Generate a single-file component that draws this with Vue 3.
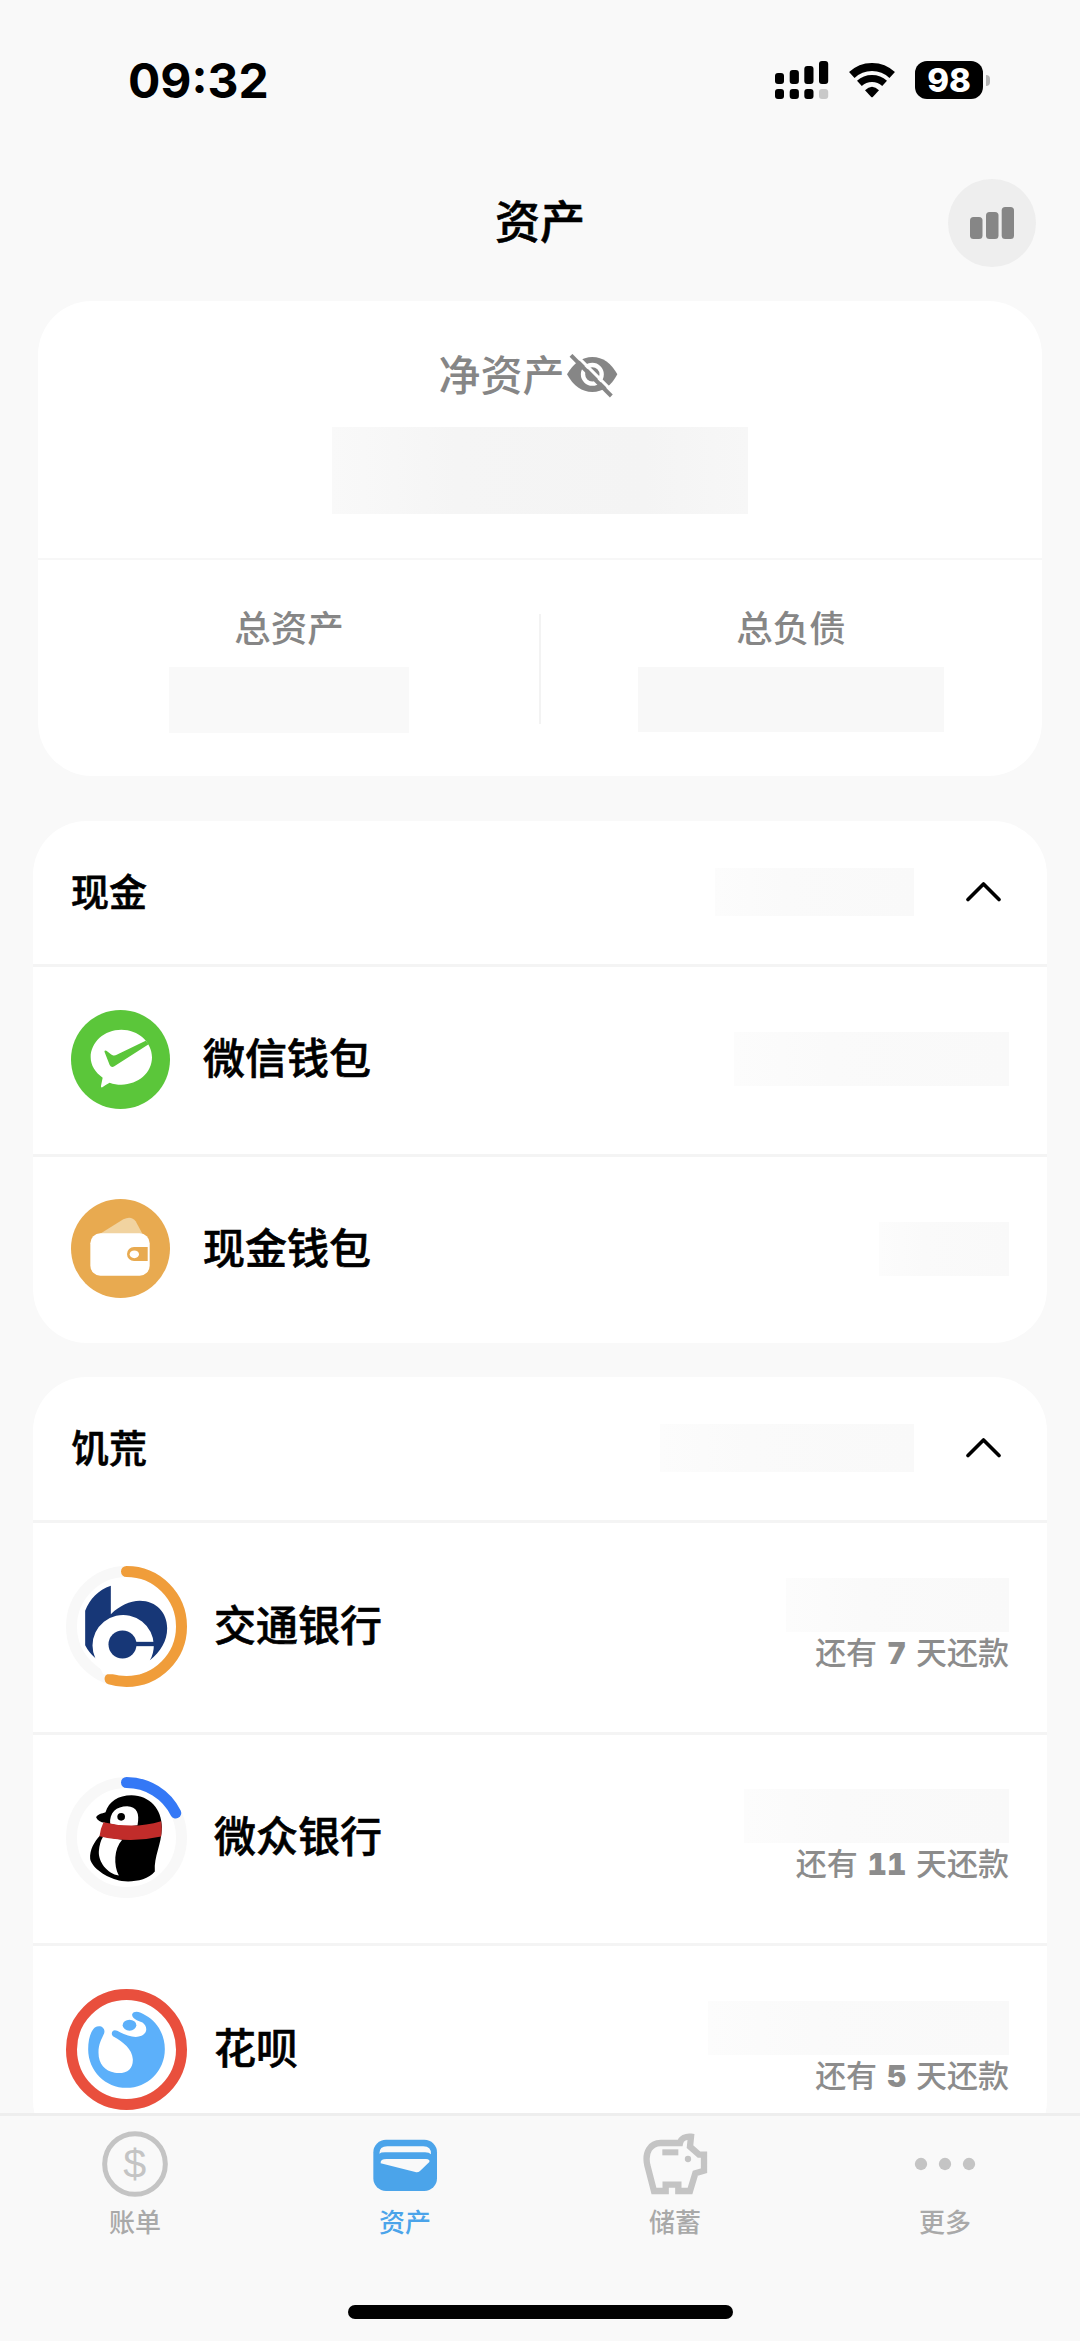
<script setup>
const cash = [
  { id: 'wechat', name: '微信钱包', width: 275 },
  { id: 'wallet', name: '现金钱包', width: 130 },
]
const debts = [
  { id: 'bocom', name: '交通银行', width: 223, days: 7, color: '#f09d3a', percent: 54.8 },
  { id: 'webank', name: '微众银行', width: 265, days: 11, color: '#3478f6', percent: 17.6 },
  { id: 'huabei', name: '花呗', width: 301, days: 5, color: '#e94f3d', percent: 100 },
]
</script>

<template>
  <div class="phone">
    <header class="status">
      <span class="time">09:32</span>
      <div class="indicators">
        <svg class="signal" width="54" height="38" viewBox="0 0 54 38">
          <rect x="0" y="12" width="9" height="11" rx="3" />
          <rect x="14.7" y="9" width="9.2" height="14" rx="3" />
          <rect x="29.3" y="5" width="9.2" height="18" rx="3" />
          <rect x="44" y="0" width="9.2" height="23" rx="3" />
          <rect x="0" y="28" width="9" height="10" rx="3" />
          <rect x="14.7" y="28" width="9.2" height="10" rx="3" />
          <rect x="29.3" y="28" width="9.2" height="10" rx="3" />
          <rect x="44" y="28" width="9.2" height="10" rx="3" fill="#c9c9c9" />
        </svg>
        <svg class="wifi" width="46" height="35" viewBox="0 0 46 35">
          <path d="M2.8 12A29.5 29.5 0 0 1 43.2 12" fill="none" stroke="#000" stroke-width="8" />
          <path d="M10.4 20.4A18.5 18.5 0 0 1 35.6 20.4" fill="none" stroke="#000" stroke-width="7" />
          <path d="M16 27.3Q23 20.3 30 27.3L24 33.8Q23 34.8 22 33.8Z" />
        </svg>
        <span class="battery">98</span>
        <i class="battery-cap"></i>
      </div>
    </header>

    <nav class="navbar">
      <h1>资产</h1>
      <button class="chart" aria-label="chart">
        <svg width="44" height="32" viewBox="0 0 44 32" fill="#868686">
          <rect x="0" y="10" width="12.5" height="22" rx="3.5" />
          <rect x="16" y="5" width="12.5" height="27" rx="3.5" />
          <rect x="31.7" y="0" width="12.3" height="32" rx="3.5" />
        </svg>
      </button>
    </nav>

    <main>
      <section class="summary">
        <div class="net">
          <div class="net-label">
            <span>净资产</span>
            <svg width="51" height="44" viewBox="801 102 153 132">
              <path d="M801 163C820 130 846 111 877 111C909 111 934 130 952 163C934 198 908 216 877 216C846 216 820 198 801 163Z" fill="#868686" />
              <circle cx="877" cy="163" r="28" fill="none" stroke="#fff" stroke-width="13" />
              <path d="M824 101L944 221" stroke="#fff" stroke-width="9" />
              <path d="M813 106L934 228" stroke="#868686" stroke-width="12" />
            </svg>
          </div>
          <div class="mask net-mask"></div>
        </div>
        <div class="totals">
          <div class="total">
            <span>总资产</span>
            <div class="mask assets-mask"></div>
          </div>
          <div class="total">
            <span>总负债</span>
            <div class="mask debts-mask"></div>
          </div>
        </div>
      </section>

      <section class="group">
        <div class="group-head">
          <h2>现金</h2>
          <div class="mask head-mask cash-mask"></div>
          <svg class="chevron" width="35" height="21" viewBox="0 0 35 21"><path d="M2 18.5L17.5 3L33 18.5" /></svg>
        </div>
        <div v-for="a in cash" :key="a.id" class="row">
          <svg v-if="a.id === 'wechat'" class="round" viewBox="95 91 297 297">
            <circle cx="243.5" cy="239.5" r="148.5" fill="#5bc63a" />
            <path fill="#fff" d="M246 150C297 150 338 187 338 233C338 279 297 315 246 315C234 315 222 313 211 309Q199 315 189 323Q184 325 185 318L190 294C168 279 154 257 154 233C154 187 195 150 246 150Z" />
            <path fill="#5bc63a" d="M196 218Q193 211 201 213C211 218 217 230 229 227L319 183L328 194L225 260Q216 265 211 256Z" />
          </svg>
          <svg v-else class="round" viewBox="95 660 297 297">
            <circle cx="243.5" cy="808.5" r="148.5" fill="#e8aa50" />
            <path d="M180 766L252 721Q276 709 289 727L310 766Z" fill="#f1d3a0" />
            <rect x="153" y="763" width="178" height="127" rx="30" fill="#fff" />
            <path d="M284 804H325V846H284A21 21 0 0 1 284 804Z" fill="#e8aa50" />
            <ellipse cx="285" cy="826" rx="14" ry="11.5" fill="#fff" />
          </svg>
          <span class="name">{{ a.name }}</span>
          <div class="mask row-mask" :style="{ width: a.width + 'px' }"></div>
        </div>
      </section>

      <section class="group">
        <div class="group-head">
          <h2>饥荒</h2>
          <div class="mask head-mask famine-mask"></div>
          <svg class="chevron" width="35" height="21" viewBox="0 0 35 21"><path d="M2 18.5L17.5 3L33 18.5" /></svg>
        </div>
        <div v-for="d in debts" :key="d.id" class="row debt">
          <svg class="ring" viewBox="-181.5 -181.5 363 363">
            <circle r="165" fill="none" stroke="#f8f8f8" stroke-width="33" />
            <circle
              r="165" fill="none" :stroke="d.color" stroke-width="33" stroke-linecap="round"
              pathLength="100" :stroke-dasharray="d.percent + ' 100'" transform="rotate(-90)"
            />
            <g v-if="d.id === 'bocom'" transform="translate(-260 -737)">
              <path fill="#173777" d="M213 615V700C240 675 270 660 300 660C350 660 382 697 382 742C382 780 362 812 330 838L250 793L167 832Q147 815 136 793V690C150 655 175 628 213 615Z" />
              <path fill="#fff" d="M167 834A92 92 0 1 1 342 793Q342 818 330 839L300 880H190Z" />
              <circle cx="248" cy="791" r="42" fill="#173777" />
              <path d="M280 783H346V796H280Z" fill="#173777" />
            </g>
            <g v-else-if="d.id === 'webank'" transform="translate(-260 -291)">
              <path d="M169 231C172 220 187 219 197 215C207 183 235 164 275 164C330 165 366 205 366 260C365 315 342 345 345 393C320 425 258 427 230 418C190 407 154 377 151 355C149 328 164 303 180 286L195 247C182 245 173 240 169 231Z" />
              <path fill="#fff" d="M211 250C208 216 230 197 262 197C291 198 300 218 293 254Q250 262 211 250ZM190 288L247 298C222 325 221 375 237 405C202 399 175 364 177 332Q179 306 190 288Z" />
              <circle cx="244" cy="229" r="11.5" />
              <path fill="#c12c2a" d="M191 245Q280 267 364 242Q368 267 364 288Q270 309 179 287Q182 263 191 245Z" />
            </g>
            <g v-else transform="translate(-260 -926)" fill="#5cb0fa">
              <path d="M145 925C145 895 153 870 165 860C180 850 198 860 193 877C185 896 176 908 176 935C176 970 195 990 225 996C262 1000 280 985 279 955C277 925 250 903 222 888C210 880 217 863 232 870C260 885 285 893 305 885C325 875 322 855 308 845C291 840 275 832 277 820C283 808 300 812 318 824C350 840 375 880 375 925C375 990 323 1041 260 1041C197 1041 145 990 145 925Z" />
              <ellipse cx="269" cy="853" rx="20.5" ry="16.5" />
            </g>
          </svg>
          <span class="name">{{ d.name }}</span>
          <div class="due">
            <div class="mask row-mask" :style="{ width: d.width + 'px' }"></div>
            <span class="due-text">还有 <b>{{ d.days }}</b> 天还款</span>
          </div>
        </div>
      </section>
    </main>

    <footer class="tabbar">
      <div class="tabs">
        <div class="tab">
          <svg width="66" height="66" viewBox="126 92 198 198">
            <circle cx="225" cy="191" r="91" fill="none" stroke="#c4c4c4" stroke-width="15" />
            <text x="224" y="234" text-anchor="middle" class="dollar">$</text>
          </svg>
          <span>账单</span>
        </div>
        <div class="tab active">
          <svg width="66" height="66" viewBox="936 92 198 198">
            <rect x="940" y="118" width="191" height="154" rx="38" fill="#4ba4ea" />
            <path fill="#f9f9f9" d="M958 160Q958 138 982 138H1090Q1114 138 1113 162Q1108 156 1095 156H975Q962 156 958 160ZM962 189Q960 176 980 176H1098Q1111 177 1108 185L1080 212Q1074 217 1066 215Z" />
          </svg>
          <span>资产</span>
        </div>
        <div class="tab">
          <svg width="66" height="66" viewBox="126 92 198 198">
            <path d="M182 128H240C243 114 258 107 273 109L270 139L297 163H312V211L286 219L270 272H235V253H197V272H162L142 195C133 155 152 128 182 128Z" fill="none" stroke="#c4c4c4" stroke-width="19" />
            <rect x="187" y="147" width="48" height="18" fill="#c4c4c4" />
            <circle cx="264" cy="176" r="9.5" fill="#c4c4c4" />
          </svg>
          <span>储蓄</span>
        </div>
        <div class="tab">
          <svg width="66" height="66" viewBox="936 92 198 198" fill="#c4c4c4">
            <circle cx="963" cy="191" r="18.5" />
            <circle cx="1035" cy="191" r="18.5" />
            <circle cx="1107" cy="191" r="18.5" />
          </svg>
          <span>更多</span>
        </div>
      </div>
      <div class="home"></div>
    </footer>
  </div>
</template>

<style>
body { margin: 0; background: #f9f9f9; }
</style>

<style scoped>
* { box-sizing: border-box; }
.phone {
  width: 1080px;
  height: 2341px;
  display: flex;
  flex-direction: column;
  overflow: hidden;
  background: #f9f9f9;
  color: #000;
  font-family: Inter, "Noto Sans CJK SC", sans-serif;
  font-weight: 500;
}
svg { display: block; flex: none; }
h1, h2 { margin: 0; }

.status {
  height: 146px;
  flex: none;
  display: flex;
  justify-content: space-between;
  padding: 61px 90px 0 128px;
}
.time { font-size: 48px; line-height: 40px; font-weight: 700; }
.indicators { display: flex; height: 38px; align-items: center; }
.wifi { margin-left: 20px; }
.battery {
  width: 68px;
  height: 38px;
  margin-left: 20px;
  border-radius: 12px;
  background: #000;
  color: #fff;
  font-size: 33px;
  line-height: 38px;
  font-weight: 800;
  text-align: center;
}
.battery-cap { width: 4px; height: 11px; margin-left: 3px; border-radius: 0 4px 4px 0; background: #b5b5b5; }

.navbar {
  height: 155px;
  flex: none;
  display: grid;
  grid-template-columns: 88px 1fr 88px;
  align-items: center;
  padding: 0 44px 2px;
}
.navbar h1 { grid-column: 2; text-align: center; font-size: 45px; line-height: 60px; font-weight: 500; -webkit-text-stroke: 0.6px; }
.chart {
  width: 88px;
  height: 88px;
  border: 0;
  padding: 0;
  border-radius: 50%;
  background: #eee;
  display: flex;
  align-items: center;
  justify-content: center;
}

main { flex: 1; min-height: 0; overflow: hidden; padding: 0 33px; }
.mask { background: linear-gradient(90deg, #fcfcfc, #fafafa 35%, #f9f9f9); flex: none; }

.summary { height: 475px; margin: 0 5px 45px; border-radius: 54px; background: #fff; color: #868686; }
.net { height: 259px; border-bottom: 2px solid #f7f7f7; padding-top: 43px; display: flex; flex-direction: column; align-items: center; }
.net-label { display: flex; align-items: center; height: 56px; font-size: 42px; margin-right: 24px; gap: 2px; }
.net-label svg { margin-top: 7px; }
.net-mask { width: 416px; height: 87px; margin-top: 27px; background: linear-gradient(90deg, #f9f9f9, #f5f5f5 30%, #f4f4f4 75%, #f7f7f7); }
.totals { display: flex; height: 216px; background: linear-gradient(#f3f3f3, #f3f3f3) center 54px / 2px 110px no-repeat; }
.total { flex: 1; display: flex; flex-direction: column; align-items: center; font-size: 36.5px; line-height: 48px; padding-top: 45px; }
.assets-mask { width: 240px; height: 66px; margin-top: 14px; background: #f9f9f9; }
.debts-mask { width: 306px; height: 65px; margin-top: 14px; background: #f8f8f8; }

.group { border-radius: 54px; background: #fff; margin: 0 0 34px; }
.group-head { height: 143px; display: flex; align-items: center; padding: 0 46px 2px 38px; }
.group-head h2 { font-size: 38px; line-height: 50px; font-weight: 500; margin-right: auto; -webkit-text-stroke: 0.6px; }
.head-mask { height: 48px; margin-right: 52px; }
.cash-mask { width: 199px; }
.famine-mask { width: 254px; }
.chevron { fill: none; stroke: #000; stroke-width: 3.6; stroke-linecap: round; stroke-linejoin: round; }
.row { height: 189.5px; border-top: 3px solid #f4f4f4; display: flex; align-items: center; padding: 0 38px 2px; }
.round { width: 99px; height: 99px; margin-right: 33px; }
.name { font-size: 42px; line-height: 56px; margin-right: auto; -webkit-text-stroke: 0.6px; }
.row-mask { height: 54px; }
.debt { height: 211.5px; padding-left: 33px; }
.ring { width: 121px; height: 121px; margin-right: 27px; }
.debt .name { padding-bottom: 1px; }
.due { display: flex; flex-direction: column; align-items: flex-end; padding-bottom: 1px; }
.due-text { font-size: 31px; line-height: 42px; color: #8c8c8c; white-space: pre; word-spacing: 1.5px; }
.due-text b { font-weight: 900; font-size: 30px; font-variant-numeric: tabular-nums; }

.tabbar { height: 228px; flex: none; border-top: 3px solid #eee; background: #f9f9f9; display: flex; flex-direction: column; align-items: center; justify-content: space-between; padding: 15px 0 22px; }
.tabs { display: flex; width: 100%; }
.tab { flex: 1; display: flex; flex-direction: column; align-items: center; font-size: 26px; line-height: 34px; gap: 9px; color: #a9a9a9; }
.active { color: #4ba4ea; }
.dollar { font: 124px "Liberation Sans", sans-serif; fill: #c4c4c4; }
.home { width: 385px; height: 14px; border-radius: 7px; background: #000; }
</style>
